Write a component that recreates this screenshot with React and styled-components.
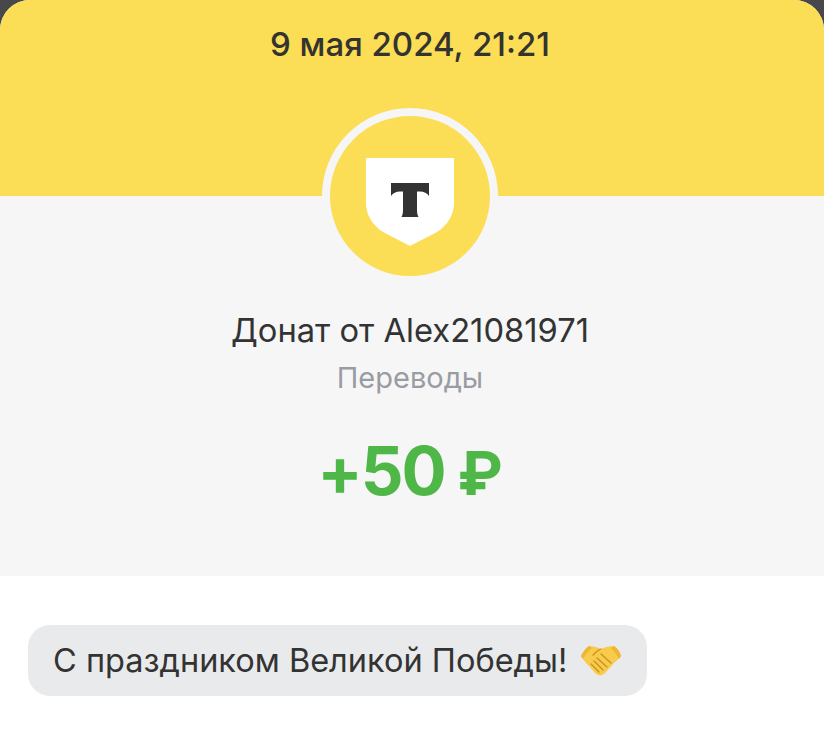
import styled, { createGlobalStyle } from 'styled-components'

const GlobalStyle = createGlobalStyle`
  html, body {
    margin: 0;
    padding: 0;
    background: #48484a;
  }
  body {
    font-family: Inter, "Noto Sans", "Liberation Sans", sans-serif;
  }
`

const Sheet = styled.div`
  width: 824px;
  height: 744px;
  display: flex;
  flex-direction: column;
  background: #ffffff;
  border-radius: 30px 30px 0 0;
  overflow: hidden;
`

const Header = styled.header`
  height: 196px;
  flex: none;
  box-sizing: border-box;
  padding: 24px 4px 0 0;
  background: #fbdd56;
  text-align: center;
`

const DateText = styled.div`
  font-size: 33px;
  line-height: 40px;
  font-weight: 500;
  color: #333330;
`

const Summary = styled.section`
  height: 380px;
  flex: none;
  box-sizing: border-box;
  padding-right: 4px;
  display: flex;
  flex-direction: column;
  align-items: center;
  background: #f6f6f7;
`

const Avatar = styled.div`
  width: 176px;
  height: 176px;
  margin-top: -88px;
  flex: none;
  box-sizing: border-box;
  padding-top: 12px;
  display: flex;
  align-items: center;
  justify-content: center;
  border: 8px solid #f6f6f7;
  border-radius: 50%;
  background: #fbdd56;
`

const Title = styled.div`
  margin-top: 25px;
  font-size: 32.7px;
  line-height: 42px;
  color: #333333;
`

const Category = styled.div`
  margin-top: 9px;
  font-size: 29px;
  line-height: 36px;
  color: #9a9ca3;
`

const Amount = styled.div`
  margin-top: 35px;
  font-size: 67px;
  line-height: 80px;
  font-weight: 700;
  letter-spacing: -2px;
  color: #4fb748;
`

const Ruble = styled.span`
  margin-left: -1px;
  font-size: 61px;
  letter-spacing: 0;
`

const Footer = styled.section`
  padding: 49px 28px 0;
  display: flex;
  align-items: flex-start;
`

const Bubble = styled.div`
  height: 71px;
  box-sizing: border-box;
  padding: 0 25px;
  display: flex;
  align-items: center;
  gap: 13px;
  border-radius: 22px;
  background: #e9eaec;
  font-size: 32.5px;
  color: #333333;
`

function ShieldLogo() {
  return (
    <svg width="88" height="88" viewBox="0 0 88 88">
      <path
        d="M0 0H88V45C88 56 82 67 71 74L44 88L17 74C6 67 0 56 0 45Z"
        fill="#ffffff"
      />
      <path
        d="M25 25H63V38C61 35 58 33.5 54 33.5H51V52C51 55 51.5 57 52.5 59H35.5C36.5 57 37 55 37 52V33.5H34C30 33.5 27 35 25 38Z"
        fill="#333333"
      />
    </svg>
  )
}

function Handshake() {
  return (
    <svg width="42" height="32" viewBox="0 0 42 32">
      <path
        d="M1 11C3 7 6 3 9 1C13 1 17 2 21 4C25 2 30 1 34 1C37 3 40 7 41 11C39 14 36 16 34 18L25 28C22 31 19 31 16 29L8 20C5 17 3 14 1 11Z"
        fill="#f8cb4a"
      />
      <path
        d="M13 10C16 7 18 5 21 4M17 13L27 22M14 16L23 25M11 19L19 27M21 9L31 18"
        stroke="#c98f24"
        strokeWidth="1.3"
        strokeLinecap="round"
        fill="none"
      />
      <path d="M1 11C3 7 6 3 9 1L12 3C8 6 5 10 3 14Z M34 1C37 3 40 7 41 11L39 14C37 10 34 6 31 3Z" fill="#eeb537" />
    </svg>
  )
}

export default function App() {
  return (
    <>
      <GlobalStyle />
      <Sheet>
        <Header>
          <DateText>9 мая 2024, 21:21</DateText>
        </Header>
        <Summary>
          <Avatar>
            <ShieldLogo />
          </Avatar>
          <Title>Донат от Alex21081971</Title>
          <Category>Переводы</Category>
          <Amount>
            +50 <Ruble>₽</Ruble>
          </Amount>
        </Summary>
        <Footer>
          <Bubble>
            С праздником Великой Победы!
            <Handshake />
          </Bubble>
        </Footer>
      </Sheet>
    </>
  )
}
